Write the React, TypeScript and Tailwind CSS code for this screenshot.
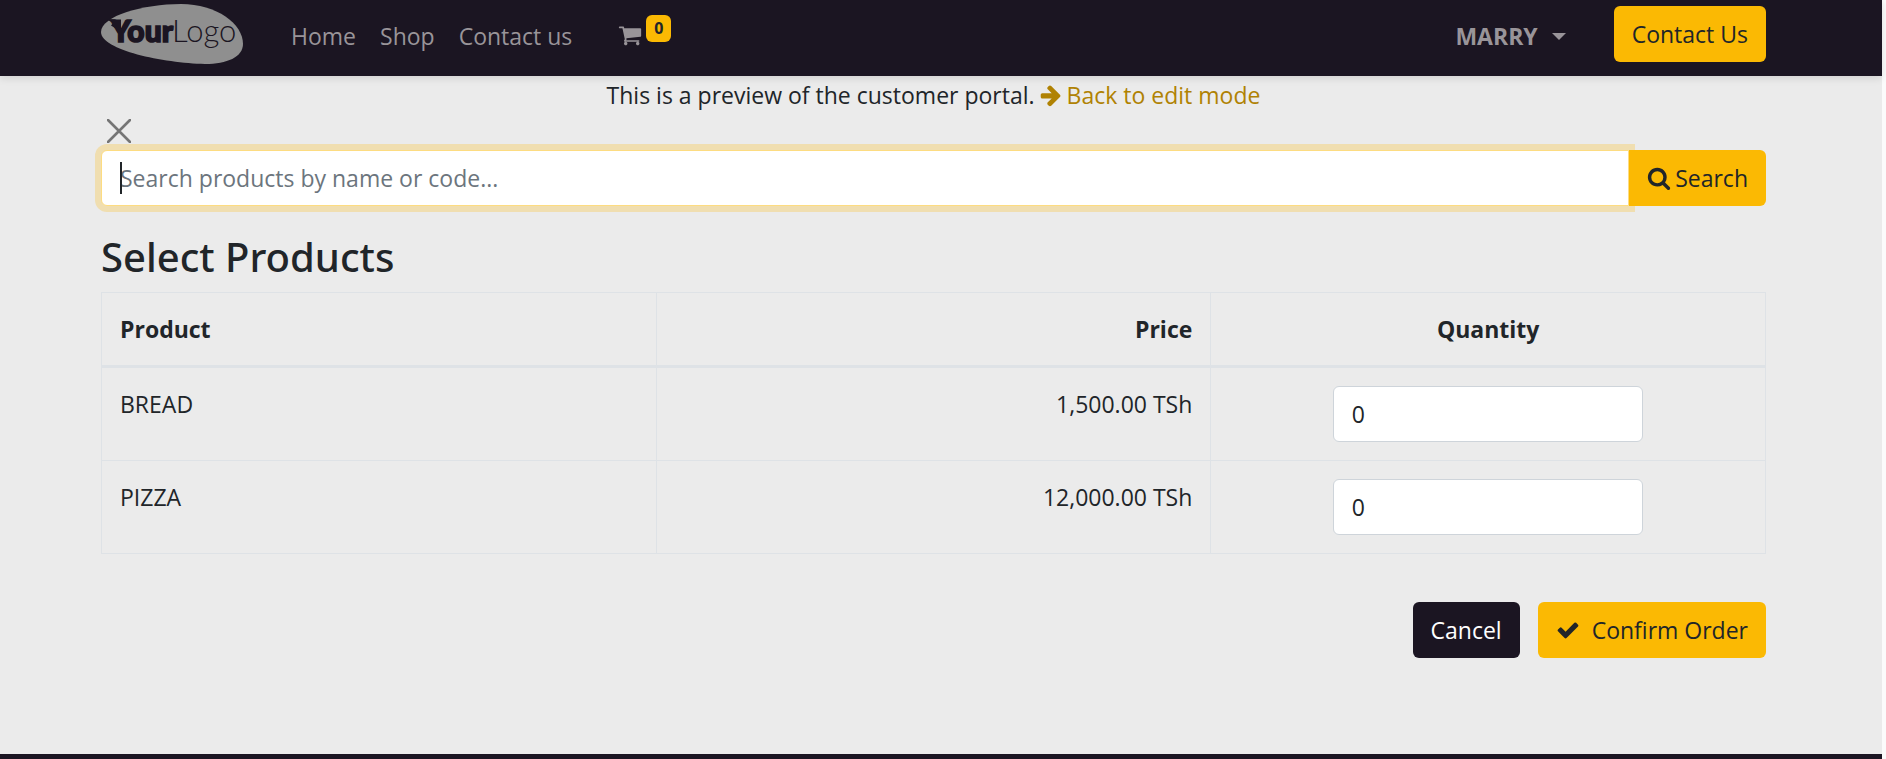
import type { ReactNode } from "react";

const icons = {
  cart: "M704 1536q0 52-38 90t-90 38-90-38-38-90 38-90 90-38 90 38 38 90zm896 0q0 52-38 90t-90 38-90-38-38-90 38-90 90-38 90 38 38 90zm128-1088v512q0 24-16.5 42.5t-40.5 21.5l-1044 122q13 60 13 70 0 16-24 64h920q26 0 45 19t19 45-19 45-45 19h-1024q-26 0-45-19t-19-45q0-11 8-31.5t16-36 21.5-40 15.5-29.5l-177-823h-204q-26 0-45-19t-19-45 19-45 45-19h256q16 0 28.5 6.5t19.5 15.5 13 24.5 8 26 5.5 29.5 4.5 26h1201q26 0 45 19t19 45z",
  search:
    "M1216 832q0-185-131.5-316.5t-316.5-131.5-316.5 131.5-131.5 316.5 131.5 316.5 316.5 131.5 316.5-131.5 131.5-316.5zm512 832q0 52-38 90t-90 38q-54 0-90-38l-343-342q-179 124-399 124-143 0-273.5-55.5t-225-150-150-225-55.5-273.5 55.5-273.5 150-225 225-150 273.5-55.5 273.5 55.5 225 150 150 225 55.5 273.5q0 220-124 399l343 343q37 37 37 90z",
  check:
    "M1671 566q0 40-28 68l-724 724-136 136q-28 28-68 28t-68-28l-136-136-362-362q-28-28-28-68t28-68l136-136q28-28 68-28t68 28l294 295 656-657q28-28 68-28t68 28l136 136q28 28 28 68z",
  arrow:
    "M1600 960q0 54-37 91l-651 651q-39 37-91 37-51 0-90-37l-75-75q-38-38-38-91t38-91l293-293h-704q-52 0-84.5-37.5t-32.5-90.5v-128q0-53 32.5-90.5t84.5-37.5h704l-293-294q-38-36-38-90t38-90l75-75q38-38 90-38 53 0 91 38l651 651q37 35 37 90z",
};

function Icon({ name }: { name: keyof typeof icons }) {
  return (
    <svg viewBox="0 0 1792 1792" className="size-6 shrink-0 fill-current" aria-hidden="true">
      <path d={icons[name]} />
    </svg>
  );
}

function Logo() {
  return (
    <svg viewBox="0 0 142 60" className="h-[60px] w-[142px]" role="img" aria-label="Your Logo">
      <path
        d="M0 28C0 12 42 0 80 0C116 0 142 20 142 40C142 53 126 60 104 60C62 59 0 46 0 28Z"
        fill="#8f8f8f"
      />
      <path d="M6 15.500H20V24H14L10 21.500L12 19Z" fill="#1b1522" />
      <path d="M9 18L13 17L11 20Z" fill="#8f8f8f" />
      <text
        x="10"
        y="38"
        fontFamily="Lato"
        fontWeight="900"
        fontSize="30"
        fill="#1b1522"
        stroke="#1b1522"
        strokeWidth="1.6"
      >
        Your
      </text>
      <text x="71" y="38" fontFamily="Lato" fontWeight="300" fontSize="31" fill="#1b1522">
        Logo
      </text>
    </svg>
  );
}

function NavLink({ children }: { children: ReactNode }) {
  return (
    <a href="#" className="px-3">
      {children}
    </a>
  );
}

const products = [
  { name: "BREAD", price: "1,500.00 TSh" },
  { name: "PIZZA", price: "12,000.00 TSh" },
];

const button = "flex h-14 items-center rounded-md px-[18px]";

export default function App() {
  return (
    <div className="flex min-h-screen bg-[#fbfbfb] pr-1 font-['Open_Sans',sans-serif] text-[23px] leading-9 text-[#212529]">
      <div className="flex min-w-0 grow flex-col bg-[#ebebeb]">
        <header className="h-[76px] bg-[#1b1522] pr-[15px] text-[#999499] shadow-[0_2px_8px_rgba(0,0,0,0.12)]">
          <div className="mx-auto flex h-full max-w-[1665px] items-start">
            <a href="#" className="pt-1">
              <Logo />
            </a>
            <nav className="ml-9 flex pt-[18px]">
              <NavLink>Home</NavLink>
              <NavLink>Shop</NavLink>
              <NavLink>Contact us</NavLink>
            </nav>
            <a href="#" aria-label="Cart" className="ml-[34px] flex pt-[15px]">
              <span className="pt-2">
                <Icon name="cart" />
              </span>
              <span className="ml-1 h-[27px] rounded-md bg-[#fbb903] px-2 text-base leading-[27px] font-bold text-[#212529]">
                0
              </span>
            </a>
            <button className="mt-[18px] ml-auto flex items-center gap-[14px] font-bold">
              MARRY
              <svg viewBox="0 0 14 7" className="h-[7px] w-[14px] fill-current" aria-hidden="true">
                <path d="M0 0H14L7 7Z" />
              </svg>
            </button>
            <a href="#" className={`${button} mt-[6px] ml-12 bg-[#fbb903] text-[#212529]`}>
              Contact Us
            </a>
          </div>
        </header>

        <main className="grow pr-[15px] pb-24">
          <div className="mx-auto max-w-[1665px]">
            <p className="flex items-center justify-center gap-1 pt-px">
              This is a preview of the customer portal.
              <a href="#" className="flex items-center gap-1 text-[#b08203]">
                <Icon name="arrow" />
                Back to edit mode
              </a>
            </p>
            <button aria-label="Close" className="mb-px flex h-9 w-9 items-center justify-center text-[#757575]">
              <svg viewBox="0 0 24 24" className="size-6 fill-none stroke-current" aria-hidden="true">
                <path d="M1 1L23 23M23 1L1 23" strokeWidth="2.6" strokeLinecap="round" />
              </svg>
            </button>

            <form className="relative flex" onSubmit={(e) => e.preventDefault()}>
              <input
                type="text"
                aria-label="Search products"
                placeholder="Search products by name or code..."
                className="h-14 min-w-0 grow rounded-l-md border border-[#fddc81] bg-white px-[18px] shadow-[0_0_0_6px_#f0deb0] outline-none placeholder:text-[#6c757d]"
              />
              <span className="absolute top-3 left-[19px] h-8 w-[2px] bg-[#212529]" aria-hidden="true" />
              <button className="relative flex h-14 items-center gap-1 rounded-r-md bg-[#fbb903] px-[18px]">
                <Icon name="search" />
                Search
              </button>
            </form>

            <h1 className="pt-[26px] font-['Noto_Sans',sans-serif] text-[40px] leading-[50px] font-medium">
              Select Products
            </h1>

            <table className="mt-[10px] w-full table-fixed border-collapse">
              <thead>
                <tr>
                  <th className="border border-b-3 border-[#dee2e6] p-[18px] text-left">Product</th>
                  <th className="border border-b-3 border-[#dee2e6] p-[18px] text-right">Price</th>
                  <th className="border border-b-3 border-[#dee2e6] p-[18px] text-center">Quantity</th>
                </tr>
              </thead>
              <tbody>
                {products.map((p) => (
                  <tr key={p.name} className="align-top">
                    <td className="border border-[#dee2e6] p-[18px]">{p.name}</td>
                    <td className="border border-[#dee2e6] p-[18px] text-right">{p.price}</td>
                    <td className="border border-[#dee2e6] p-[18px]">
                      <input
                        type="text"
                        inputMode="numeric"
                        aria-label={`Quantity of ${p.name}`}
                        defaultValue="0"
                        className="mx-auto block h-14 w-3/5 rounded-md border border-[#ced4da] bg-white px-[18px]"
                      />
                    </td>
                  </tr>
                ))}
              </tbody>
            </table>

            <div className="mt-12 flex justify-end gap-[18px]">
              <button className={`${button} bg-[#1b1522] text-white`}>Cancel</button>
              <button className={`${button} gap-3 bg-[#fbb903]`}>
                <Icon name="check" />
                Confirm Order
              </button>
            </div>
          </div>
        </main>

        <footer className="h-[5px] bg-[#1b1522]" />
      </div>
    </div>
  );
}
